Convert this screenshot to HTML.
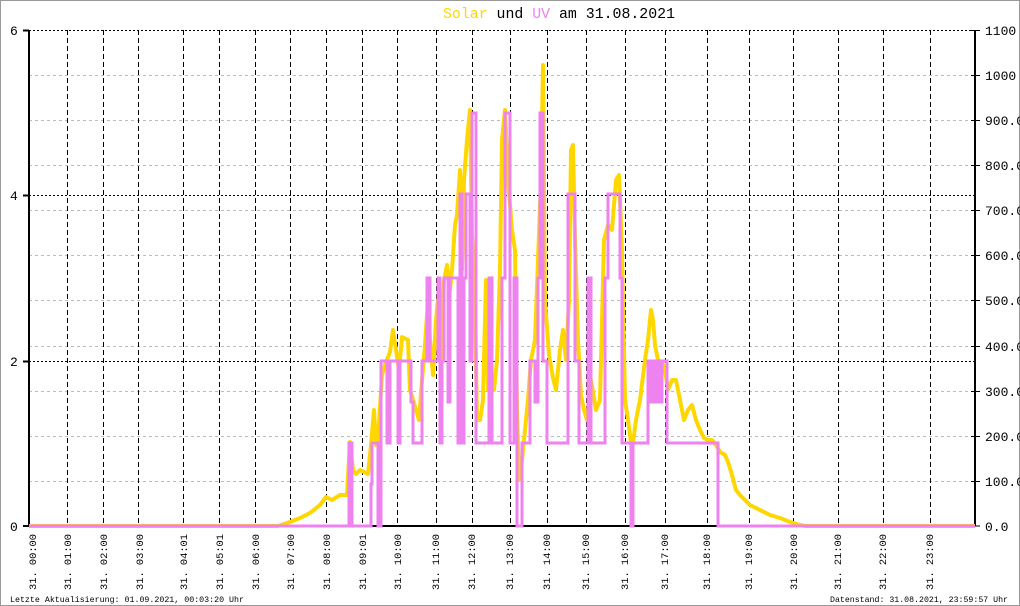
<!DOCTYPE html>
<html><head><meta charset="utf-8"><style>
html,body{margin:0;padding:0;background:#fff;}
svg{display:block;font-family:"Liberation Mono","DejaVu Sans Mono",monospace;}
</style></head><body>
<svg width="1020" height="606" viewBox="0 0 1020 606" xmlns="http://www.w3.org/2000/svg">
<rect x="0.5" y="0.5" width="1019" height="605" fill="#fff" stroke="#999" stroke-width="1"/>
<text x="443" y="18" font-size="14.6" textLength="232" lengthAdjust="spacingAndGlyphs"><tspan fill="#ffd700">Solar</tspan> und <tspan fill="#ee82ee">UV</tspan> am 31.08.2021</text>
<g shape-rendering="crispEdges">
<g stroke="#bbb" stroke-width="1" stroke-dasharray="3,3">
<line x1="29" y1="75.5" x2="975" y2="75.5"/><line x1="29" y1="120.5" x2="975" y2="120.5"/><line x1="29" y1="165.5" x2="975" y2="165.5"/><line x1="29" y1="210.5" x2="975" y2="210.5"/><line x1="29" y1="255.5" x2="975" y2="255.5"/><line x1="29" y1="300.5" x2="975" y2="300.5"/><line x1="29" y1="346.5" x2="975" y2="346.5"/><line x1="29" y1="391.5" x2="975" y2="391.5"/><line x1="29" y1="436.5" x2="975" y2="436.5"/><line x1="29" y1="481.5" x2="975" y2="481.5"/>
</g>
<g stroke="#000" stroke-width="1" stroke-dasharray="2,2">
<line x1="29" y1="30.5" x2="975" y2="30.5"/><line x1="29" y1="195.5" x2="975" y2="195.5"/><line x1="29" y1="361.5" x2="975" y2="361.5"/>
</g>
<g stroke="#000" stroke-width="1" stroke-dasharray="5,3">
<line x1="67.5" y1="30" x2="67.5" y2="526"/><line x1="103.5" y1="30" x2="103.5" y2="526"/><line x1="138.5" y1="30" x2="138.5" y2="526"/><line x1="183.5" y1="30" x2="183.5" y2="526"/><line x1="219.5" y1="30" x2="219.5" y2="526"/><line x1="255.5" y1="30" x2="255.5" y2="526"/><line x1="290.5" y1="30" x2="290.5" y2="526"/><line x1="326.5" y1="30" x2="326.5" y2="526"/><line x1="362.5" y1="30" x2="362.5" y2="526"/><line x1="397.5" y1="30" x2="397.5" y2="526"/><line x1="436.5" y1="30" x2="436.5" y2="526"/><line x1="472.5" y1="30" x2="472.5" y2="526"/><line x1="510.5" y1="30" x2="510.5" y2="526"/><line x1="547.5" y1="30" x2="547.5" y2="526"/><line x1="586.5" y1="30" x2="586.5" y2="526"/><line x1="625.5" y1="30" x2="625.5" y2="526"/><line x1="665.5" y1="30" x2="665.5" y2="526"/><line x1="707.5" y1="30" x2="707.5" y2="526"/><line x1="749.5" y1="30" x2="749.5" y2="526"/><line x1="793.5" y1="30" x2="793.5" y2="526"/><line x1="838.5" y1="30" x2="838.5" y2="526"/><line x1="883.5" y1="30" x2="883.5" y2="526"/><line x1="930.5" y1="30" x2="930.5" y2="526"/>
</g>
<g stroke="#000" stroke-width="2">
<line x1="29" y1="30" x2="29" y2="526"/><line x1="975" y1="30" x2="975" y2="526"/><line x1="29" y1="526" x2="975" y2="526"/>
<line x1="23" y1="30.5" x2="29" y2="30.5"/><line x1="23" y1="195.5" x2="29" y2="195.5"/><line x1="23" y1="361.5" x2="29" y2="361.5"/><line x1="23" y1="526" x2="29" y2="526"/>
</g>
<g stroke="#000" stroke-width="1">
<line x1="971" y1="30.5" x2="980" y2="30.5"/><line x1="971" y1="75.5" x2="980" y2="75.5"/><line x1="971" y1="120.5" x2="980" y2="120.5"/><line x1="971" y1="165.5" x2="980" y2="165.5"/><line x1="971" y1="210.5" x2="980" y2="210.5"/><line x1="971" y1="255.5" x2="980" y2="255.5"/><line x1="971" y1="300.5" x2="980" y2="300.5"/><line x1="971" y1="346.5" x2="980" y2="346.5"/><line x1="971" y1="391.5" x2="980" y2="391.5"/><line x1="971" y1="436.5" x2="980" y2="436.5"/><line x1="971" y1="481.5" x2="980" y2="481.5"/><line x1="971" y1="526" x2="980" y2="526"/>
</g>
</g>
<g font-size="13" fill="#000">
<text x="10" y="35">6</text><text x="10" y="200">4</text><text x="10" y="366">2</text><text x="10" y="531">0</text>
<text x="985" y="35">1100</text><text x="985" y="80">1000</text><text x="985" y="125">900.0</text><text x="985" y="170">800.0</text><text x="985" y="215">700.0</text><text x="985" y="260">600.0</text><text x="985" y="305">500.0</text><text x="985" y="351">400.0</text><text x="985" y="396">300.0</text><text x="985" y="441">200.0</text><text x="985" y="486">100.0</text><text x="985" y="531">0.0</text>
</g>
<polyline fill="none" stroke="#ffd700" stroke-width="4" stroke-linejoin="round" points="29,526 278,526 290,522 300,518 310,513 320,505 326,497 332,500 340,495 347,495 350,442 353,470 356,474 360,470 364,472 368,474 371,445 374,410 376,445 378,440 382,375 386,362 390,352 393,330 396,350 399,370 402,337 408,340 410,390 413,400 416,410 419,420 422,380 425,345 428,300 430,340 433,375 436,320 438,300 441,360 444,280 447,265 450,290 452,270 455,225 457,215 460,170 462,270 464,180 467,140 470,110 472,235 475,300 477,420 480,420 483,400 486,280 488,390 491,370 494,390 497,360 500,270 502,140 505,110 508,180 512,230 515,250 517,410 519,480 522,460 525,430 528,400 531,360 535,340 538,260 541,180 543,65 545,300 549,355 553,378 556,390 560,350 563,330 566,360 569,300 571,150 573,145 575,240 578,340 581,395 584,410 587,420 591,380 596,410 600,400 604,240 608,225 612,230 616,180 619,175 622,250 625,400 628,420 632,450 636,420 640,400 645,360 648,340 651,310 653,320 655,345 658,360 662,362 665,370 668,390 672,380 676,380 680,400 684,420 688,410 692,405 696,420 700,430 704,438 708,440 712,440 716,445 720,452 725,455 728,462 732,475 736,490 740,495 745,500 750,505 760,510 770,515 780,518 790,522 800,525 805,526 975,526"/>
<polyline fill="none" stroke="#ee82ee" stroke-width="3" points="29,526 349,526 349,443 352,443 352,526 371,526 371,484 372,484 372,443 378,443 378,526 381,526 381,361 387,361 387,443 390,443 390,361 398,361 398,443 400,443 400,361 411,361 411,402 413,402 413,443 422,443 422,361 427,361 427,278 430,278 430,361 438,361 438,278 440,278 440,443 442,443 442,361 444,361 444,278 448,278 448,402 450,402 450,278 458,278 458,443 460,443 460,194 462,194 462,443 464,443 464,278 466,278 466,194 470,194 470,361 472,361 472,113 476,113 476,443 489,443 489,278 492,278 492,443 502,443 502,278 505,278 505,113 510,113 510,443 514,443 514,278 517,278 517,526 522,526 522,443 530,443 530,361 535,361 535,402 538,402 538,278 540,278 540,113 543,113 543,361 547,361 547,443 568,443 568,194 575,194 575,361 579,361 579,443 588,443 588,278 591,278 591,443 605,443 605,278 608,278 608,194 620,194 620,278 622,278 622,443 631,443 631,526 633,526 633,443 648,443 648,361 650,361 650,402 652,402 652,361 655,361 655,402 657,402 657,361 660,361 660,402 662,402 662,361 667,361 667,443 718,443 718,526 975,526"/>
<g font-size="10.5" fill="#000">
<text transform="translate(36,590) rotate(-90)" textLength="56" lengthAdjust="spacingAndGlyphs">31. 00:00</text>
<text transform="translate(71,590) rotate(-90)" textLength="56" lengthAdjust="spacingAndGlyphs">31. 01:00</text>
<text transform="translate(107,590) rotate(-90)" textLength="56" lengthAdjust="spacingAndGlyphs">31. 02:00</text>
<text transform="translate(143,590) rotate(-90)" textLength="56" lengthAdjust="spacingAndGlyphs">31. 03:00</text>
<text transform="translate(187,590) rotate(-90)" textLength="56" lengthAdjust="spacingAndGlyphs">31. 04:01</text>
<text transform="translate(223,590) rotate(-90)" textLength="56" lengthAdjust="spacingAndGlyphs">31. 05:01</text>
<text transform="translate(259,590) rotate(-90)" textLength="56" lengthAdjust="spacingAndGlyphs">31. 06:00</text>
<text transform="translate(294,590) rotate(-90)" textLength="56" lengthAdjust="spacingAndGlyphs">31. 07:00</text>
<text transform="translate(330,590) rotate(-90)" textLength="56" lengthAdjust="spacingAndGlyphs">31. 08:00</text>
<text transform="translate(366,590) rotate(-90)" textLength="56" lengthAdjust="spacingAndGlyphs">31. 09:01</text>
<text transform="translate(401,590) rotate(-90)" textLength="56" lengthAdjust="spacingAndGlyphs">31. 10:00</text>
<text transform="translate(439,590) rotate(-90)" textLength="56" lengthAdjust="spacingAndGlyphs">31. 11:00</text>
<text transform="translate(475,590) rotate(-90)" textLength="56" lengthAdjust="spacingAndGlyphs">31. 12:00</text>
<text transform="translate(513,590) rotate(-90)" textLength="56" lengthAdjust="spacingAndGlyphs">31. 13:00</text>
<text transform="translate(550,590) rotate(-90)" textLength="56" lengthAdjust="spacingAndGlyphs">31. 14:00</text>
<text transform="translate(589,590) rotate(-90)" textLength="56" lengthAdjust="spacingAndGlyphs">31. 15:00</text>
<text transform="translate(628,590) rotate(-90)" textLength="56" lengthAdjust="spacingAndGlyphs">31. 16:00</text>
<text transform="translate(668,590) rotate(-90)" textLength="56" lengthAdjust="spacingAndGlyphs">31. 17:00</text>
<text transform="translate(710,590) rotate(-90)" textLength="56" lengthAdjust="spacingAndGlyphs">31. 18:00</text>
<text transform="translate(752,590) rotate(-90)" textLength="56" lengthAdjust="spacingAndGlyphs">31. 19:00</text>
<text transform="translate(797,590) rotate(-90)" textLength="56" lengthAdjust="spacingAndGlyphs">31. 20:00</text>
<text transform="translate(841,590) rotate(-90)" textLength="56" lengthAdjust="spacingAndGlyphs">31. 21:00</text>
<text transform="translate(886,590) rotate(-90)" textLength="56" lengthAdjust="spacingAndGlyphs">31. 22:00</text>
<text transform="translate(933,590) rotate(-90)" textLength="56" lengthAdjust="spacingAndGlyphs">31. 23:00</text>
</g>
<g font-size="8.5" fill="#000">
<text x="10" y="602" textLength="234" lengthAdjust="spacingAndGlyphs">Letzte Aktualisierung: 01.09.2021, 00:03:20 Uhr</text>
<text x="830" y="602" textLength="178" lengthAdjust="spacingAndGlyphs">Datenstand: 31.08.2021, 23:59:57 Uhr</text>
</g>
</svg>
</body></html>
